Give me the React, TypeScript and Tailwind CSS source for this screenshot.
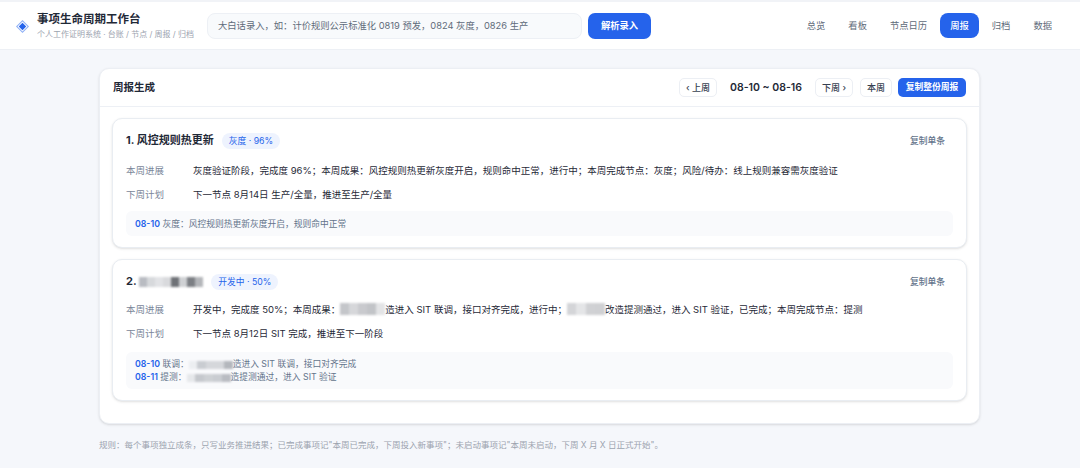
import type { ReactNode } from "react";

const navItems = ["总览", "看板", "节点日历", "周报", "归档", "数据"];

// 打码的色块
function Redact({ w, shades, h = 12 }: { w: number; shades: string[]; h?: number }) {
  return (
    <span className="inline-flex align-[-2px] blur-[1px]" style={{ width: w, height: h }}>
      {shades.map((c, i) => (
        <span key={i} className="flex-1" style={{ backgroundColor: c }} />
      ))}
    </span>
  );
}

function Row({ label, children }: { label: string; children: ReactNode }) {
  return (
    <div className="flex h-[18px] items-center text-[9.5px] leading-[18px]">
      <span className="w-[67px] shrink-0 text-[#7a8699]">{label}</span>
      <span className="whitespace-nowrap text-[#1f2937]">{children}</span>
    </div>
  );
}

function Tag({ children }: { children: ReactNode }) {
  return (
    <span className="ml-[8px] rounded-full bg-[#eef3fe] px-[7px] py-[1px] text-[8.75px] leading-[14px] text-[#2563eb]">
      {children}
    </span>
  );
}

function CopyOne() {
  return <span className="ml-auto mr-[8px] text-[8.75px] font-medium leading-[12px] text-[#64748b]">复制单条</span>;
}

function TimelineDate({ children }: { children: ReactNode }) {
  return <b className="font-semibold text-[#2563eb]">{children}</b>;
}

function Btn({ children }: { children: ReactNode }) {
  return (
    <button className="flex h-[19px] items-center rounded-[5px] border border-[#eceff4] bg-white px-[6px] text-[9px] font-medium text-[#374151]">
      {children}
    </button>
  );
}

export default function App() {
  return (
    <div className="h-[468px] w-[1080px] overflow-hidden bg-[#f5f7fb] font-['Inter','Noto_Sans_CJK_SC',sans-serif]">
      {/* 顶栏 */}
      <header className="flex h-[50px] items-center border-b border-[#edf0f5] border-t-[2px] border-t-[#f1f3f7] bg-white pl-[16px] pr-[18px]">
        <svg width="13" height="13" viewBox="0 0 14 14" className="mt-[1px] shrink-0">
          <path d="M7 0 14 7 7 14 0 7Z" fill="#8fb0f6" />
          <path d="M7 1.6 12.4 7 7 12.4 1.6 7Z" fill="#ffffff" />
          <path d="M7 3 11 7 7 11 3 7Z" fill="#2563eb" />
        </svg>
        <div className="ml-[8px] w-[170px] shrink-0">
          <div className="text-[11.5px] font-bold leading-[15px] text-[#1f2937]">事项生命周期工作台</div>
          <div className="mt-[2px] whitespace-nowrap text-[8px] leading-[11px] text-[#9ca3af]">个人工作证明系统 · 台账 / 节点 / 周报 / 归档</div>
        </div>
        <div className="flex h-[26px] w-[375px] items-center rounded-[8px] border border-[#edf0f5] bg-[#f8fafc] pl-[10px] text-[9.3px] text-[#5f6b7a]">
          大白话录入，如：计价规则公示标准化 0819 预发，0824 灰度，0826 生产
        </div>
        <button className="ml-[6px] h-[26px] w-[63px] rounded-[7px] bg-[#2563eb] text-[9.3px] font-semibold text-white">解析录入</button>
        <nav className="ml-auto flex items-center gap-[3px] text-[9.3px] text-[#5f6b7a]">
          {navItems.map((item) => (
            <span
              key={item}
              className={
                item === "周报"
                  ? "flex h-[25px] items-center rounded-[8px] bg-[#2563eb] px-[10px] font-medium text-white"
                  : "flex h-[25px] items-center rounded-[8px] px-[10px]"
              }
            >
              {item}
            </span>
          ))}
        </nav>
      </header>

      <main className="ml-[99px] mt-[18px] w-[881px]">
        <section className="h-[356px] rounded-[10px] border border-[#eceff4] bg-white shadow-sm">
          <div className="flex h-[38px] items-center border-b border-[#edf0f5] pl-[13px] pr-[13px]">
            <h2 className="text-[10.5px] font-bold text-[#1f2937]">周报生成</h2>
            <div className="ml-auto flex items-center">
              <Btn>‹ 上周</Btn>
              <span className="mx-[13px] text-[10.5px] font-semibold text-[#1f2937]">08-10 ~ 08-16</span>
              <Btn>下周 ›</Btn>
              <span className="w-[7px]" />
              <Btn>本周</Btn>
              <button className="ml-[6px] h-[19px] w-[68px] rounded-[5px] bg-[#2563eb] text-[8.75px] font-semibold text-white">复制整份周报</button>
            </div>
          </div>

          <div className="flex flex-col gap-[11px] px-[12px] pt-[11px]">
            <article className="h-[130px] rounded-[10px] border border-[#e9edf2] bg-white px-[13px] pt-[13px] shadow-sm">
              <div className="flex h-[17px] items-center">
                <h3 className="text-[11px] font-bold text-[#1f2937]">1. 风控规则热更新</h3>
                <Tag>灰度 · 96%</Tag>
                <CopyOne />
              </div>
              <div className="mt-[13px] flex flex-col gap-[6px]">
                <Row label="本周进展">灰度验证阶段，完成度 96%；本周成果：风控规则热更新灰度开启，规则命中正常，进行中；本周完成节点：灰度；风险/待办：线上规则兼容需灰度验证</Row>
                <Row label="下周计划">下一节点 8月14日 生产/全量，推进至生产/全量</Row>
              </div>
              <div className="mt-[7px] h-[25px] rounded-[6px] bg-[#f9fafc] pl-[9px] text-[8.75px] leading-[27px] text-[#64748b]">
                <TimelineDate>08-10</TimelineDate> 灰度：风控规则热更新灰度开启，规则命中正常
              </div>
            </article>

            <article className="h-[142px] rounded-[10px] border border-[#e9edf2] bg-white px-[13px] pt-[13px] shadow-sm">
              <div className="flex h-[17px] items-center">
                <h3 className="flex items-center text-[11px] font-bold text-[#1f2937]">
                  2.&nbsp;<Redact w={64} h={10} shades={["#b9bcc2", "#d7d9dc", "#e2e3e6", "#d9dadd", "#6f7277", "#cfd1d4", "#7c7f84", "#b4b6ba"]} />
                </h3>
                <Tag>开发中 · 50%</Tag>
                <CopyOne />
              </div>
              <div className="mt-[11px] flex flex-col gap-[6px]">
                <Row label="本周进展">
                  开发中，完成度 50%；本周成果：
                  <Redact w={45} shades={["#c4c6ca", "#d6d7da", "#c9cace", "#c2c4c8", "#e3e4e6"]} />
                  造进入 SIT 联调，接口对齐完成，进行中；
                  <Redact w={38} shades={["#d4d5d8", "#e4e5e7", "#d0d1d4", "#cfd0d3"]} />
                  改造提测通过，进入 SIT 验证，已完成；本周完成节点：提测
                </Row>
                <Row label="下周计划">下一节点 8月12日 SIT 完成，推进至下一阶段</Row>
              </div>
              <div className="mt-[9px] h-[37px] rounded-[6px] bg-[#f9fafc] pl-[9px] pt-[6px] text-[8.75px] leading-[13px] text-[#64748b]">
                <div className="whitespace-nowrap">
                  <TimelineDate>08-10</TimelineDate> 联调：<Redact w={44} h={8} shades={["#eceef1", "#c9ccd1", "#d5d7db", "#d5d7db", "#b4b7bd"]} />造进入 SIT 联调，接口对齐完成
                </div>
                <div className="whitespace-nowrap">
                  <TimelineDate>08-11</TimelineDate> 提测：<Redact w={44} h={8} shades={["#e6e8eb", "#c5c8cd", "#cdd0d4", "#c9ccd1", "#b9bcc2"]} />造提测通过，进入 SIT 验证
                </div>
              </div>
            </article>
          </div>
        </section>

        <p className="mt-[15px] text-[8.5px] leading-[12px] text-[#9ca3af]">
          规则：每个事项独立成条，只写业务推进结果；已完成事项记"本周已完成，下周投入新事项"；未启动事项记"本周未启动，下周 X 月 X 日正式开始"。
        </p>
      </main>
    </div>
  );
}
